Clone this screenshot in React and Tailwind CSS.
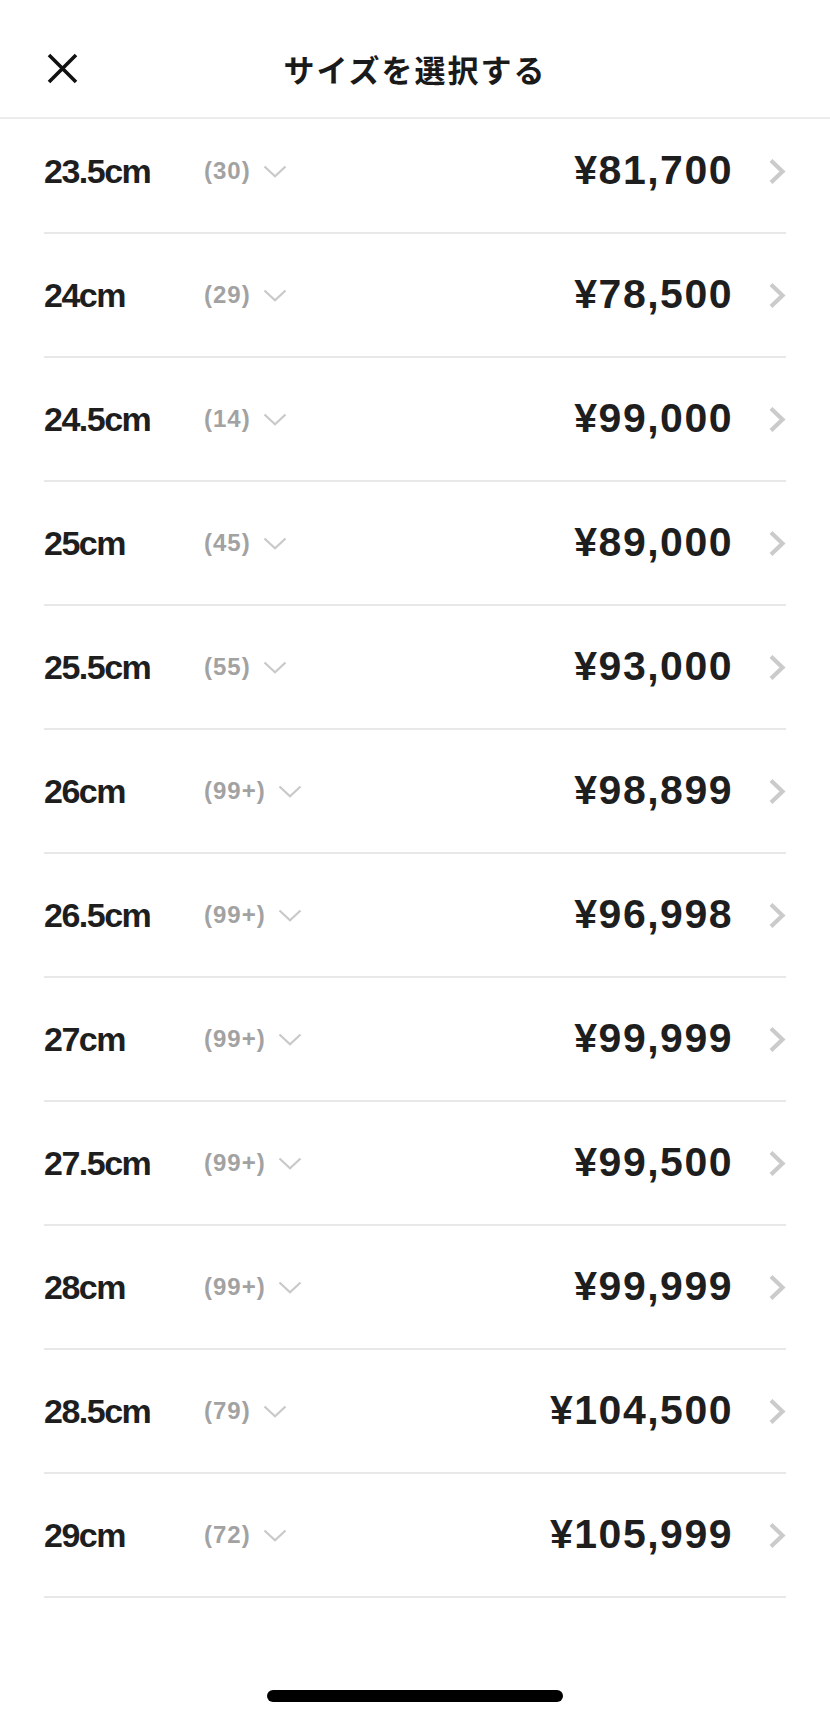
import React from 'react';

const sizes = [
  { size: '23.5cm', count: '30', price: '¥81,700' },
  { size: '24cm', count: '29', price: '¥78,500' },
  { size: '24.5cm', count: '14', price: '¥99,000' },
  { size: '25cm', count: '45', price: '¥89,000' },
  { size: '25.5cm', count: '55', price: '¥93,000' },
  { size: '26cm', count: '99+', price: '¥98,899' },
  { size: '26.5cm', count: '99+', price: '¥96,998' },
  { size: '27cm', count: '99+', price: '¥99,999' },
  { size: '27.5cm', count: '99+', price: '¥99,500' },
  { size: '28cm', count: '99+', price: '¥99,999' },
  { size: '28.5cm', count: '79', price: '¥104,500' },
  { size: '29cm', count: '72', price: '¥105,999' },
  { size: '29.5cm', count: '68', price: '¥109,000' },
];

const CloseIcon = () => (
  <svg width="31" height="31" viewBox="0 0 31 31" fill="none">
    <path d="M2 2 L29 29 M29 2 L2 29" stroke="#111" strokeWidth="3.6" />
  </svg>
);

const ChevronDown = () => (
  <svg width="24" height="13" viewBox="0 0 24 13" fill="none">
    <path d="M1.5 1.5 L12 11.2 L22.5 1.5" stroke="#c9c9c9" strokeWidth="2.2" />
  </svg>
);

const ChevronRight = () => (
  <svg width="18" height="27" viewBox="0 0 18 27" fill="none">
    <path d="M3 2.5 L14.5 13.5 L3 24.5" stroke="#cbcbcb" strokeWidth="4.2" />
  </svg>
);

const SizeRow = ({ size, count, price }) => (
  <div className="mx-[44px] h-[124px] flex items-center border-b-2 border-[#e8e8e8]">
    <div className="w-[160px] shrink-0 text-[34px] font-bold tracking-[-1.5px] text-[#1e1e1e] font-['Liberation_Sans',Arial,sans-serif]">
      {size}
    </div>
    <div className="flex items-center gap-[12px]">
      <span className="text-[24px] font-bold tracking-[1px] text-[#a2a2a2] font-['Liberation_Sans',Arial,sans-serif]">
        ({count})
      </span>
      <ChevronDown />
    </div>
    <div className="ml-auto flex items-center gap-[35px]">
      <span className="text-[41px] font-bold tracking-[1.5px] text-[#1e1e1e] font-['Liberation_Sans',Arial,sans-serif]">
        {price}
      </span>
      <ChevronRight />
    </div>
  </div>
);

export default function App() {
  return (
    <div className="w-[830px] h-[1719px] bg-white flex flex-col overflow-hidden">
      <header className="relative h-[119px] shrink-0 flex items-center justify-center pt-[19px] border-b-2 border-[#ececec]">
        <div className="absolute left-[47px] top-[53px]">
          <CloseIcon />
        </div>
        <h1 className="text-[31px] font-bold tracking-[2px] text-[#1a1a1a] font-['Noto_Sans_CJK_JP','Noto_Sans',sans-serif] leading-none">
          サイズを選択する
        </h1>
      </header>
      <div className="h-[1525px] shrink-0 overflow-hidden">
        <div className="-mt-[9px]">
          {sizes.map((s) => (
            <SizeRow key={s.size} {...s} />
          ))}
        </div>
      </div>
      <footer className="flex-1 flex justify-center">
        <div className="mt-[46px] w-[296px] h-[12px] rounded-full bg-black" />
      </footer>
    </div>
  );
}
